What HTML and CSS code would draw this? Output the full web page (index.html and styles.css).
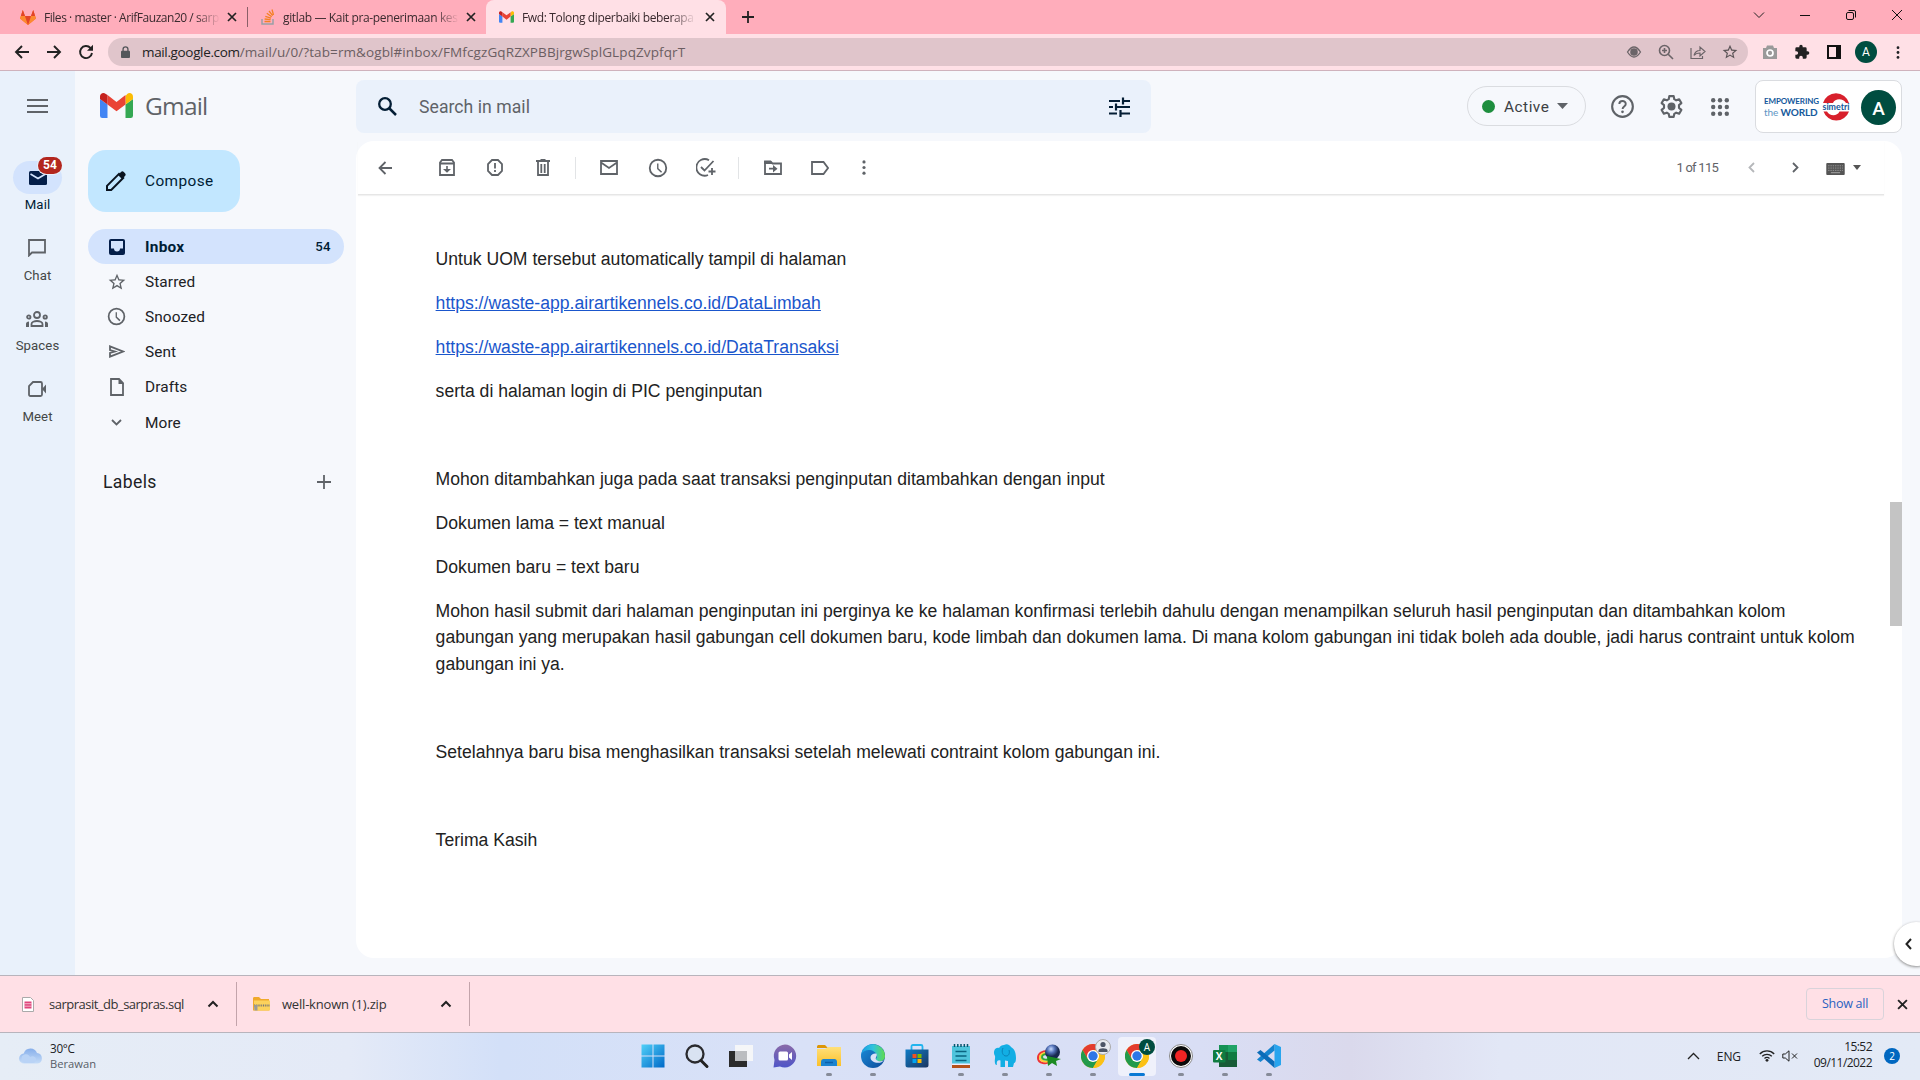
FILE: index.html
```html
<!DOCTYPE html>
<html lang="en">
<head>
<meta charset="utf-8">
<title>Gmail</title>
<link rel="stylesheet" href="styles.css">
</head>
<body>
<svg class="defs" aria-hidden="true">
  <defs>
    <linearGradient id="gWin" x1="0" y1="0" x2="1" y2="1"><stop offset="0" stop-color="#50d0f8"/><stop offset="1" stop-color="#0069c8"/></linearGradient>
    <linearGradient id="gChat" x1="0" y1="0" x2="0" y2="1"><stop offset="0" stop-color="#8a6aa8"/><stop offset="1" stop-color="#4f55c8"/></linearGradient>
    <linearGradient id="gFold" x1="0" y1="0" x2="0" y2="1"><stop offset="0" stop-color="#ffe07a"/><stop offset="1" stop-color="#fbc02a"/></linearGradient>
    <linearGradient id="gEdge" x1="0" y1="0" x2="1" y2="0"><stop offset="0" stop-color="#1b9de2"/><stop offset=".5" stop-color="#2fc3dd"/><stop offset="1" stop-color="#62dc4c"/></linearGradient>
    <linearGradient id="gEdge2" x1="0" y1="0" x2="1" y2="1"><stop offset="0" stop-color="#1b8fdc"/><stop offset="1" stop-color="#0c4a98"/></linearGradient>
    <linearGradient id="gStore" x1="0" y1="0" x2="1" y2="1"><stop offset="0" stop-color="#0f7cc6"/><stop offset="1" stop-color="#1b3560"/></linearGradient>
    <linearGradient id="gCloud" x1="0" y1="0" x2="0" y2="1"><stop offset="0" stop-color="#86aeea"/><stop offset="1" stop-color="#c5dcf8"/></linearGradient>
    <radialGradient id="gGlobe" cx=".4" cy=".3"><stop offset="0" stop-color="#c8dcff"/><stop offset=".5" stop-color="#5472b8"/><stop offset="1" stop-color="#18284e"/></radialGradient>
    <symbol id="gmail" viewBox="0 0 33 25">
      <path d="M0 6v16.700A2.300 2.300 0 0 0 2.300 25H7.500V11.500z" fill="#4285f4"/>
      <path d="M33 6v16.700A2.300 2.300 0 0 1 30.700 25H25.500V11.500z" fill="#34a853"/>
      <path d="M25.500 3v8.500L33 6V3.400C33 .3 29.500-1 27.200.9z" fill="#fbbc04"/>
      <path d="M7.500 11.500V2.100l9 6.800 9-6.800v9.400l-9 6.800z" fill="#ea4335"/>
      <path d="M0 3.400V6l7.500 5.500V2.100L5.800.9C3.500-1 0 .3 0 3.400z" fill="#c5221f"/>
    </symbol>
    <symbol id="close" viewBox="0 0 10 10"><path d="M1 1l8 8M9 1L1 9" stroke="currentColor" stroke-width="1.700" fill="none"/></symbol>
    <symbol id="caretup" viewBox="0 0 12 8"><path d="M1.500 6.500L6 2l4.500 4.500" stroke="currentColor" stroke-width="2" fill="none"/></symbol>
    <symbol id="clock" viewBox="0 0 24 24"><path fill="currentColor" d="M12 2a10 10 0 1 0 0 20 10 10 0 0 0 0-20zm0 18a8 8 0 1 1 0-16 8 8 0 0 1 0 16zm.5-13H11v6l4.300 4.300 1.200-1.200-4-3.800z"/></symbol>
    <symbol id="dots" viewBox="0 0 4 16"><g fill="currentColor"><circle cx="2" cy="2" r="1.700"/><circle cx="2" cy="8" r="1.700"/><circle cx="2" cy="14" r="1.700"/></g></symbol>
    <symbol id="star" viewBox="0 0 24 24"><path fill="currentColor" d="M22 9.240l-7.190-.62L12 2 9.190 8.630 2 9.240l5.460 4.730L5.820 21 12 17.270 18.180 21l-1.630-7.030L22 9.240zM12 15.400l-3.760 2.270 1-4.280-3.320-2.880 4.380-.38L12 6.100l1.710 4.040 4.380.38-3.320 2.880 1 4.280L12 15.400z"/></symbol>
    <symbol id="chrome" viewBox="0 0 24 24">
      <circle cx="12" cy="12" r="12" fill="#fbc116"/>
      <path d="M1.600 6A12 12 0 0 1 22.400 6H12L6.800 15z" fill="#e33b2e"/>
      <path d="M1.600 6A12 12 0 0 0 12 24L17.200 15 12 18 6.800 15z" fill="#229a4b"/>
      <path d="M12 6h10.400A12 12 0 0 1 12 24l5.200-9z" fill="#fbc116"/>
      <circle cx="12" cy="12" r="6" fill="#fff"/><circle cx="12" cy="12" r="4.700" fill="#2d77e6"/>
    </symbol>
  </defs>
</svg>

<header class="tabstrip">
  <div class="tab tab-first">
    <svg class="fav" viewBox="0 0 16 16"><path d="M8 16L0 9.500 2.800 1l2.200 6h6l2.200-6L16 9.500z" fill="#fc6d26"/><path d="M5 7H.9L0 9.500 8 16zM11 7h4.100l.9 2.500L8 16z" fill="#fc8a30"/><path d="M2.800 1l2.200 6H.9zM13.200 1L11 7h4.100zM5 7h6l-3 9z" fill="#e24329"/></svg>
    <span class="tab-title t1">Files · master · ArifFauzan20 / sarp</span>
    <svg class="tab-x"><use href="#close"/></svg>
  </div>
  <div class="tab tab-second">
    <svg class="fav" viewBox="0 0 16 16"><path d="M2 10v5h11v-5" stroke="#9aa0a6" stroke-width="1.500" fill="none"/><path d="M4.500 12.500h6M4.600 10l6 .7M5.300 7.300l5.700 1.800M6.800 4.300l4.900 3.500M9 2l3.700 4.700M12 .5l1.500 5.500" stroke="#f48024" stroke-width="1.300"/></svg>
    <span class="tab-title t2">gitlab — Kait pra-penerimaan kes</span>
    <svg class="tab-x"><use href="#close"/></svg>
  </div>
  <div class="tab tab-active">
    <svg class="fav fav-gm"><use href="#gmail"/></svg>
    <span class="tab-title t3">Fwd: Tolong diperbaiki beberapa</span>
    <svg class="tab-x"><use href="#close"/></svg>
  </div>
  <svg class="newtab" viewBox="0 0 12 12"><path d="M6 0v12M0 6h12" stroke="#222" stroke-width="1.800"/></svg>
  <div class="winctl">
    <svg viewBox="0 0 12 12"><path d="M1 3.500l5 5 5-5" stroke="#222" fill="none"/></svg>
    <svg viewBox="0 0 12 12"><path d="M1 6.500h10" stroke="#111"/></svg>
    <svg viewBox="0 0 12 12"><rect x="1.500" y="3.500" width="7" height="7" rx="1.500" stroke="#111" fill="none"/><path d="M3.500 1.500H9A1.500 1.500 0 0 1 10.500 3v5.500" stroke="#111" fill="none"/></svg>
    <svg viewBox="0 0 12 12"><path d="M1 1l10 10M11 1L1 11" stroke="#111" fill="none"/></svg>
  </div>
</header>

<div class="toolbar">
  <svg viewBox="0 0 16 16"><path d="M15 8H2M8 2L2 8l6 6" class="nav"/></svg>
  <svg viewBox="0 0 16 16"><path d="M1 8h13M8 2l6 6-6 6" class="nav"/></svg>
  <svg viewBox="0 0 16 16"><path d="M14 9A6 6 0 1 1 12.500 4L14 5.600" class="nav"/><path d="M15 .8v6H9z" fill="#222"/></svg>
  <div class="omnibox">
    <svg class="lock" viewBox="0 0 10 14"><rect x="0" y="5" width="10" height="8" rx="1" fill="#54575b"/><path d="M2.300 6V3.500a2.700 2.700 0 0 1 5.400 0V6" stroke="#54575b" stroke-width="1.500" fill="none"/></svg>
    <span class="url"><b>mail.google.com</b>/mail/u/0/?tab=rm&amp;ogbl#inbox/FMfcgzGqRZXPBBjrgwSplGLpqZvpfqrT</span>
    <div class="omni-icons">
      <svg viewBox="0 0 16 16"><path d="M1.500 8Q8-2 14.500 8 8 18 1.500 8z" fill="none" stroke="#6b6468" stroke-width="1.300"/><circle cx="8" cy="8" r="3.800" fill="#6b6468"/></svg>
      <svg viewBox="0 0 16 16"><circle cx="6.500" cy="6.500" r="5" class="oi"/><path d="M10.200 10.200L15 15M4 6.500h5M6.500 4v5" class="oi"/></svg>
      <svg viewBox="0 0 16 16"><path d="M1 4v10.500h11.500V12M4 11.500C5 7.500 7 6.500 10 6.500V3l5 4.500-5 4.500V9C7.500 9 5.500 9.500 4 11.500z" class="oi thin"/></svg>
      <svg class="bookmark"><use href="#star"/></svg>
    </div>
  </div>
  <div class="ext">
    <svg viewBox="0 0 16 16"><path d="M1 4h3l1-2.500h6L12 4h3v11H1z" fill="#9a9a9a"/><circle cx="8" cy="9" r="3" fill="none" stroke="#fff" stroke-width="1.700"/></svg>
    <svg viewBox="0 0 24 24"><path fill="#222" d="M20.500 11H19V7a2 2 0 0 0-2-2h-4V3.500a2.500 2.500 0 0 0-5 0V5H4a2 2 0 0 0-2 2v3.800h1.500a2.700 2.700 0 0 1 0 5.400H2V20a2 2 0 0 0 2 2h3.800v-1.500a2.700 2.700 0 0 1 5.400 0V22H17a2 2 0 0 0 2-2v-4h1.500a2.500 2.500 0 0 0 0-5z"/></svg>
    <svg viewBox="0 0 14 14"><path d="M1 1h12v12H1z" fill="none" stroke="#111" stroke-width="2"/><path d="M9 1h4v12H9z" fill="#111"/></svg>
    <span class="av-small">A</span>
    <svg class="menu"><use href="#dots"/></svg>
  </div>
</div>

<main class="gmail">
  <nav class="rail">
    <svg class="burger" viewBox="0 0 21 14"><path d="M0 1h21M0 7h21M0 13h21" stroke="#5f6368" stroke-width="1.800"/></svg>
    <div class="rail-item mail">
      <span class="pill"><svg width="18" height="14" viewBox="0 0 18 14"><rect width="18" height="14" rx="1.500" fill="#041e49"/><path d="M1.500 3L9 7.500 16.500 3" stroke="#d3e3fd" stroke-width="1.600" fill="none"/></svg><span class="badge">54</span></span>
      <span>Mail</span>
    </div>
    <div class="rail-item">
      <span class="pill"><svg width="18" height="18" viewBox="0 0 18 18"><path d="M1 1h16v12.500H4L1 16.500z" class="ln"/></svg></span>
      <span>Chat</span>
    </div>
    <div class="rail-item">
      <span class="pill"><svg width="22" height="16" viewBox="0 0 22 16"><g class="ln"><circle cx="11" cy="4" r="3"/><path d="M5.500 15v-2c0-2 3-3 5.500-3s5.500 1 5.500 3v2z"/><circle cx="2.800" cy="6" r="1.700"/><circle cx="19.200" cy="6" r="1.700"/></g><path d="M0 16v-3c0-1.500 1-2.500 3-2.500V16zM22 16v-3c0-1.500-1-2.500-3-2.500V16z" fill="#5f6368"/></svg></span>
      <span>Spaces</span>
    </div>
    <div class="rail-item">
      <span class="pill"><svg width="18" height="16" viewBox="0 0 18 16"><path d="M5 1h7.500c1 0 1.500.5 1.500 1.500v11c0 1-.5 1.500-1.500 1.500h-10C1.500 15 1 14.500 1 13.500V5z" class="ln"/><path d="M14 8l4-4.500v9z" fill="#5f6368"/></svg></span>
      <span>Meet</span>
    </div>
  </nav>

  <aside class="side">
    <div class="brand"><svg><use href="#gmail"/></svg><span>Gmail</span></div>
    <button class="compose"><svg viewBox="0 0 20 20"><path d="M1 19v-4.200L13 2.800l4.200 4.200L5.200 19z" fill="none" stroke="#0a1420" stroke-width="2"/><path d="M12 4l3-3c1-1 2-.8 2.800 0L19 2.200c.8.800 1 1.800 0 2.800l-3 3z" fill="#0a1420"/></svg><span>Compose</span></button>
    <div class="folder on"><svg width="16" height="16" viewBox="0 0 16 16"><rect width="16" height="16" rx="2" fill="#041e49"/><path d="M2 2h12v7.500h-3a3 3 0 0 1-6 0H2z" fill="#d3e3fd"/></svg><span>Inbox</span><em>54</em></div>
    <div class="folder"><svg width="20" height="20"><use href="#star"/></svg><span>Starred</span></div>
    <div class="folder"><svg width="21" height="21"><use href="#clock"/></svg><span>Snoozed</span></div>
    <div class="folder"><svg width="16" height="13" viewBox="0 0 16 13"><path d="M1 1.300l13 5.200-13 5.200V8l5-1.500L1 5z" class="ln"/></svg><span>Sent</span></div>
    <div class="folder"><svg width="14" height="18" viewBox="0 0 14 18"><path d="M1 1h8l4 4v12H1z" class="ln"/><path d="M8.500 0v6H14z" fill="#5f6368"/></svg><span>Drafts</span></div>
    <div class="folder more"><svg width="11" height="7" viewBox="0 0 11 7"><path d="M1 1l4.500 4.500L10 1" class="ln"/></svg><span>More</span></div>
    <div class="labels"><span>Labels</span><svg width="14" height="14" viewBox="0 0 14 14"><path d="M7 0v14M0 7h14" class="ln"/></svg></div>
  </aside>

  <section class="content">
    <div class="topbar">
      <div class="search">
        <svg width="19" height="19" viewBox="0 0 19 19"><circle cx="7" cy="7" r="5.800" fill="none" stroke="#041e35" stroke-width="2.300"/><path d="M11 11l7 7" stroke="#041e35" stroke-width="2.500"/></svg>
        <span>Search in mail</span>
        <svg width="21" height="20" viewBox="0 0 21 20"><path d="M0 4h11M14 4h7M14 .5v7M0 10h4M7 10h14M7 6.500v7M0 16.500h8M11 16.500h10M11.500 13v7" stroke="#041e35" stroke-width="2.200"/></svg>
      </div>
      <div class="active"><i></i><span>Active</span><svg width="11" height="6" viewBox="0 0 11 6"><path d="M0 0h11L5.500 6z" fill="#5f6368"/></svg></div>
      <div class="tools">
        <svg viewBox="0 0 24 24"><circle cx="12" cy="12" r="10.800" fill="none" stroke="#5f6368" stroke-width="2.200"/><path d="M8.700 9.500c0-4.400 6.700-4.400 6.700-.2 0 2.600-3.300 2.700-3.300 5.200" fill="none" stroke="#5f6368" stroke-width="2"/><circle cx="12" cy="17.600" r="1.400" fill="#5f6368"/></svg>
        <svg viewBox="0 0 24 24"><path d="M9.700 1.200h4.600l.6 3.200 2 1.200 3.100-1.100 2.300 4-2.500 2.100v2.800l2.500 2.100-2.300 4-3.100-1.100-2 1.200-.6 3.200H9.700l-.6-3.200-2-1.200L4 19.500l-2.300-4 2.500-2.100v-2.800L1.700 8.500l2.300-4 3.100 1.100 2-1.200z" fill="none" stroke="#5f6368" stroke-width="2.200" stroke-linejoin="round"/><circle cx="12" cy="12" r="4.200" fill="#5f6368"/></svg>
        <svg class="apps" viewBox="0 0 18 18"><g fill="#5f6368"><circle cx="2.200" cy="2.200" r="2.200"/><circle cx="9" cy="2.200" r="2.200"/><circle cx="15.800" cy="2.200" r="2.200"/><circle cx="2.200" cy="9" r="2.200"/><circle cx="9" cy="9" r="2.200"/><circle cx="15.800" cy="9" r="2.200"/><circle cx="2.200" cy="15.800" r="2.200"/><circle cx="9" cy="15.800" r="2.200"/><circle cx="15.800" cy="15.800" r="2.200"/></g></svg>
      </div>
      <div class="org">
        <div class="slogan"><span>EMPOWERING</span><span><i>the</i> WORLD</span></div>
        <svg class="simetri" viewBox="0 0 28 28"><path d="M1 10A13.500 13.500 0 0 1 27 10H24C22 5.500 13 4.500 11 10z" fill="#d8202c"/><path d="M27 18.500A13.500 13.500 0 0 1 1.500 18.500H5C7 23 15 24 17.500 18.500z" fill="#d8202c"/><text x="14" y="16.800" text-anchor="middle" textLength="27" lengthAdjust="spacingAndGlyphs">simetri</text></svg>
        <span class="av-big">A</span>
      </div>
    </div>

    <article class="panel">
      <div class="actions">
        <svg width="14" height="14" viewBox="0 0 14 14"><path d="M14 7H1.500M7.500 1l-6 6 6 6" class="ln"/></svg>
        <div class="grp g1">
          <svg width="16" height="17" viewBox="0 0 16 17"><path d="M1 3.500L3 1h10l2 2.500V16H1zM1 4.500h14" class="ln"/><path d="M7.200 7h1.600v3H12l-4 3.800L4 10h3.200z" fill="#5f6368"/></svg>
          <svg width="16" height="17" viewBox="0 0 16 17"><path d="M5 1h6l4 4v7l-4 4H5l-4-4V5z" class="ln"/><path d="M8 4v5.500M8 11v2" class="ln"/></svg>
          <svg width="14" height="17" viewBox="0 0 14 17"><path d="M0 2h14M4.500 1h5M2 3v13h10V3M5.300 5v9M8.700 5v9" class="ln"/></svg>
        </div>
        <div class="grp g2">
          <svg width="18" height="15" viewBox="0 0 18 15"><path d="M1 1h16v13H1zM1 2.500L9 8l8-5.500" class="ln"/></svg>
          <svg width="22" height="22" class="gray"><use href="#clock"/></svg>
          <svg width="20" height="19" viewBox="0 0 20 19"><path d="M13 2.300A8.300 8.300 0 1 0 12 17M5 9l3.500 3.500L17.500 3M16 10v7M12.500 13.500h7" class="ln"/></svg>
        </div>
        <div class="grp g3">
          <svg width="18" height="15" viewBox="0 0 18 15"><path d="M1 1.500h5.500l2 2H17V14H1zM5 8.700h6" class="ln"/><path d="M0 1h7l1.500 3H0zM9 5l4.500 3.700L9 12.500z" fill="#5f6368"/></svg>
          <svg width="18" height="14" viewBox="0 0 18 14"><path d="M1 1h11.500L17 7l-4.500 6H1z" class="ln"/></svg>
          <svg width="4" height="15" class="gray"><use href="#dots"/></svg>
        </div>
        <div class="pager">
          <span>1 of 115</span>
          <svg width="7" height="11" viewBox="0 0 7 11"><path d="M6 1L1.500 5.500 6 10" class="ln faint"/></svg>
          <svg width="7" height="11" viewBox="0 0 7 11"><path d="M1 1l4.500 4.500L1 10" class="ln"/></svg>
          <svg width="19" height="12" viewBox="0 0 20 13"><rect width="20" height="13" rx="1" fill="#555"/><path d="M2 3h16M2 5.500h16M2 8h16" stroke="#999" stroke-dasharray="1.500 1"/><path d="M5 10.500h10" stroke="#aaa"/></svg>
          <svg width="8" height="5" viewBox="0 0 8 5"><path d="M0 0h8L4 5z" fill="#555"/></svg>
        </div>
      </div>
      <div class="message">
        <p>Untuk UOM tersebut automatically tampil di halaman</p>
        <p><a>https://waste-app.airartikennels.co.id/DataLimbah</a></p>
        <p><a>https://waste-app.airartikennels.co.id/DataTransaksi</a></p>
        <p>serta di halaman login di PIC penginputan</p>
        <p>&nbsp;</p>
        <p>Mohon ditambahkan juga pada saat transaksi penginputan ditambahkan dengan input</p>
        <p>Dokumen lama = text manual</p>
        <p>Dokumen baru = text baru</p>
        <p>Mohon hasil submit dari halaman penginputan ini perginya ke ke halaman konfirmasi terlebih dahulu dengan menampilkan seluruh hasil penginputan dan ditambahkan kolom gabungan yang merupakan hasil gabungan cell dokumen baru, kode limbah dan dokumen lama. Di mana kolom gabungan ini tidak boleh ada double, jadi harus contraint untuk kolom gabungan ini ya.</p>
        <p>&nbsp;</p>
        <p>Setelahnya baru bisa menghasilkan transaksi setelah melewati contraint kolom gabungan ini.</p>
        <p>&nbsp;</p>
        <p>Terima Kasih</p>
      </div>
      <div class="thumb"></div>
    </article>
  </section>
  <div class="sidetoggle"><svg width="7" height="12" viewBox="0 0 7 12"><path d="M6 1L1.500 6 6 11" stroke="#222" stroke-width="2" fill="none"/></svg></div>
</main>

<div class="downloads">
  <div class="dl">
    <svg width="12" height="15" viewBox="0 0 12 15"><path d="M.5.5h8l3 3v11H.5z" fill="#fff" stroke="#aaa"/><path d="M2.500 4.500h7v7h-7z" fill="#e0457b"/><path d="M2.500 6.700h7M2.500 9.200h7" stroke="#fff" stroke-width=".6"/></svg>
    <span class="d1">sarprasit_db_sarpras.sql</span>
    <svg class="up"><use href="#caretup"/></svg>
  </div>
  <div class="dl">
    <svg width="17" height="14" viewBox="0 0 17 14"><path d="M0 1.500C0 .5.500 0 1.500 0H6l2 2h8v11.500H0z" fill="#f0a92c"/><path d="M1 3.500h16v10H1z" fill="#fcd25c"/><path d="M1 8.500h16" stroke="#777" stroke-width="2" stroke-dasharray="1 .8"/><path d="M1 8h3.500v5.500H1.500z" fill="#999"/></svg>
    <span class="d2">well-known (1).zip</span>
    <svg class="up"><use href="#caretup"/></svg>
  </div>
  <button class="showall">Show all</button>
  <svg class="dlx"><use href="#close"/></svg>
</div>

<footer class="taskbar">
  <div class="weather">
    <svg width="24" height="17" viewBox="0 0 24 17"><path d="M5.500 16.500a5 5 0 0 1-.8-10A7 7 0 0 1 18 6a5.300 5.300 0 0 1 .5 10.500z" fill="url(#gCloud)"/><path d="M5.500 16a4.500 4.500 0 0 1 0-8.500c3-1 5 1 5.500 2.500 3-2 6 0 6 2s-1 4-3 4z" fill="#b9d3f6"/></svg>
    <div><span class="temp">30°C</span><span class="cond">Berawan</span></div>
  </div>
  <div class="apps-row">
    <div class="app"><svg viewBox="0 0 24 24"><path d="M.5.5h11v11H.5zM12.500.5h11v11h-11zM.5 12.500h11v11H.5zM12.500 12.500h11v11h-11z" fill="url(#gWin)"/></svg></div>
    <div class="app"><svg viewBox="0 0 24 24"><circle cx="10" cy="10" r="8.500" fill="#d9e3f2" stroke="#2a2a2e" stroke-width="2.300"/><path d="M16 16.500l6 6" stroke="#222" stroke-width="3" stroke-linecap="round"/></svg></div>
    <div class="app"><svg viewBox="0 0 24 24"><path d="M0 7h18v16H0z" fill="#2b2b2b"/><path d="M6 1h18v16H6z" fill="#f5f6f8"/><path d="M6 7h12v10H6z" fill="#bbbdc0"/></svg></div>
    <div class="app"><svg viewBox="0 0 24 24"><path d="M12 .5A11.500 11.500 0 1 1 7 22.500L.5 23.500 1.500 16A11.500 11.500 0 0 1 12 .5z" fill="url(#gChat)"/><rect x="5.500" y="7.500" width="9.500" height="9" rx="1.500" fill="#fff"/><path d="M16 10.500l3-2.500v8l-3-2.500z" fill="#fff"/></svg></div>
    <div class="app run"><svg viewBox="0 0 24 24"><path d="M0 3C0 1.500.7 1 2 1h6l3 3H0z" fill="#dd9606"/><path d="M0 5h8l3-2h13v19H0z" fill="url(#gFold)"/><path d="M4 22v-4c0-2 1-3 2.500-3h11c1.500 0 2.500 1 2.500 3v4z" fill="#1c83cf"/><path d="M8 18.500h8" stroke="#0c5fa8" stroke-width="1.500"/></svg></div>
    <div class="app run"><svg viewBox="0 0 24 24"><circle cx="12" cy="12" r="12" fill="url(#gEdge2)"/><path d="M.2 10A12 12 0 0 1 24 12c0 5-5 6.500-8.500 4.500-2-1.500 1-2 .5-5C14 5 4 4 .2 10z" fill="url(#gEdge)"/><path d="M9.500 13c.5-2.500 3-4 5.800-3.500C17 12 14 13 15 15.500c2 2.500 6 2 8 .5-3 5-14 3-13.500-3z" fill="#d9e1f7"/></svg></div>
    <div class="app"><svg viewBox="0 0 24 24"><path d="M6.500 6V2.500C6.500 1.500 7 1 8 1h8c1 0 1.500.5 1.500 1.500V6" fill="none" stroke="#22b4ee" stroke-width="1.800"/><path d="M.5 5.500h23V21c0 1.700-.8 2.500-2.500 2.500H3C1.300 23.500.5 22.700.5 21z" fill="url(#gStore)"/><path d="M7.500 10h4v4h-4z" fill="#f25022"/><path d="M12.500 10h4v4h-4z" fill="#7fba00"/><path d="M7.500 15h4v4h-4z" fill="#00a4ef"/><path d="M12.500 15h4v4h-4z" fill="#ffb900"/></svg></div>
    <div class="app run"><svg viewBox="0 0 24 24"><path d="M3 21h18v3H3z" fill="#b5521b"/><path d="M3 2h18v19H3z" fill="#4fc4dc"/><path d="M3 19.500h18v1.500H3z" fill="#eef"/><path d="M6.500 7.500h11M6.500 12h11M6.500 16.500h11" stroke="#0a6480" stroke-width="1.500"/><path d="M5.500 0v3M8.800 0v3M12 0v3M15.300 0v3M18.500 0v3" stroke="#09566e" stroke-width="1.500"/></svg></div>
    <div class="app run"><svg viewBox="0 0 24 24"><path d="M11 1c3-2 6 0 7 2 4 2 5 7 5 11 0 3-.7 5-2 5l-1 4h-5v-6l-3-.5V23H7.500v-6.500C5 15.500 3 17 4 21l-1.500-.5C1 17 2.500 14 2 12-.5 8 2 3 6 4c1-2 3-3 5-3z" fill="#12aee4"/><path d="M10 4c-2 4 0 8 3 8 3 0 4-3 3-6" stroke="#0b83b8" fill="none"/></svg></div>
    <div class="app run"><svg viewBox="0 0 24 24"><g fill="none" stroke-width="2"><path d="M17 16C9 22 1 19 1 14s5-7 9-7" stroke="#e33"/><path d="M17 14.500C10 20 3 17 3 13.500S7 9 10 9" stroke="#fc3"/><path d="M16 13c-5 4-11 3-11 0 0-2 3-3 5-3" stroke="#3a3"/></g><circle cx="15.500" cy="8" r="7.500" fill="url(#gGlobe)"/><path d="M10 12l14 3-5 2 1 5-5-3-4 3z" fill="#1b8a22"/></svg></div>
    <div class="app run"><svg viewBox="0 0 24 24"><use href="#chrome"/></svg><span class="mini user"><svg viewBox="0 0 14 14"><circle cx="7" cy="4.500" r="2.600" fill="#4c5565"/><path d="M2.500 12V10.500C2.500 7.500 11.500 7.500 11.500 10.500V12z" fill="#4c5565"/></svg></span></div>
    <div class="app run current"><svg viewBox="0 0 24 24"><use href="#chrome"/></svg><span class="mini">A</span></div>
    <div class="app run"><svg viewBox="0 0 24 24"><circle cx="12" cy="12" r="11.500" fill="#fff" stroke="#888"/><circle cx="12" cy="12" r="10" fill="#0a0a0a"/><circle cx="12" cy="12" r="6" fill="#f02424"/></svg></div>
    <div class="app run"><svg viewBox="0 0 24 24"><path d="M6 1h18v22H6z" fill="#21a366"/><path d="M6 1h9v7H6z" fill="#169255"/><path d="M15 8h9v8h-9z" fill="#107c41"/><path d="M6 8h9v8H6zM6 16h18v7H6z" fill="#185c37"/><rect y="6" width="12.500" height="12.500" rx="1" fill="#107c41"/><text x="6.200" y="16" text-anchor="middle" class="xl">X</text></svg></div>
    <div class="app run"><svg viewBox="0 0 24 24"><path d="M17.500 0L24 3v18l-6.500 3z" fill="#28a5ee"/><path d="M17.500 0v6.500L3.500 18 0 15.500z" fill="#1584cf"/><path d="M17.500 24v-6.500L3.500 6 0 8.500z" fill="#0b6cb8"/></svg></div>
  </div>
  <div class="tray">
    <svg width="13" height="8" viewBox="0 0 13 8"><path d="M1 7l5.500-5.500L12 7" stroke="#222" stroke-width="1.300" fill="none"/></svg>
    <span class="lang">ENG</span>
    <svg width="16" height="13" viewBox="0 0 16 13"><path d="M.8 5a10 10 0 0 1 14.400 0M3.200 7.300a6.800 6.800 0 0 1 9.600 0M5.500 9.500a3.500 3.500 0 0 1 5 0" stroke="#222" stroke-width="1.300" fill="none"/><circle cx="8" cy="11.300" r="1.400" fill="#222"/></svg>
    <svg class="snd" width="16" height="12" viewBox="0 0 16 12"><path d="M.8 4h2.500L7 .8v10.400L3.300 8H.8zM10 3.500l5 5M15 3.500l-5 5" stroke="#222" fill="none"/></svg>
    <div class="time"><span>15:52</span><span>09/11/2022</span></div>
    <span class="notif">2</span>
  </div>
</footer>
</body>
</html>
```
FILE: styles.css
```css
* { box-sizing: border-box; }
body { margin: 0; width: 1920px; height: 1080px; overflow: hidden; display: flex; flex-direction: column; font-family: Roboto, sans-serif; color: #202124; background: #f6f8fc; }
svg { display: block; flex: none; }
.defs { position: absolute; width: 0; height: 0; }
.ln { fill: none; stroke: #5f6368; stroke-width: 1.8; }
.faint { stroke: #b5b7ba; }
button { font: inherit; border: 0; padding: 0; }

/* browser tabs */
.tabstrip { height: 34px; background: #ffadbb; display: flex; align-items: center; font: 12px "Open Sans", sans-serif; flex: none; }
.tab { display: flex; align-items: center; height: 34px; }
.tab-first { width: 248px; padding-left: 20px; }
.tab-second { width: 238px; padding-left: 12px; }
.tab-first::after { content: ""; width: 1px; height: 20px; background: #8a5f68; margin-left: 10px; }
.tab-active { width: 240px; padding-left: 13px; background: #ffe0e6; border-radius: 8px 8px 0 0; }
.fav { width: 16px; height: 16px; margin-right: 8px; }
.tab-second .fav { margin-right: 7px; }
.fav-gm { width: 15px; height: 12px; }
.tab-title { width: 176px; white-space: nowrap; color: #3a2a2e; margin-right: 7px; mask-image: linear-gradient(90deg, #000 86%, transparent); }
.t1 { letter-spacing: -.46px; }
.t2 { letter-spacing: -.36px; }
.t3 { width: 174px; letter-spacing: -.36px; margin-right: 9px; }
.tab-x { width: 10px; height: 10px; color: #222; }
.newtab { width: 12px; height: 12px; margin-left: 16px; }
.winctl { margin-left: auto; display: flex; gap: 34px; padding: 0 17px 5px 0; }
.winctl svg { width: 12px; height: 12px; }

/* address bar */
.toolbar { height: 37px; flex: none; background: #ffe0e6; border-bottom: 1px solid #cfb2bc; display: flex; align-items: center; padding-left: 14px; gap: 16px; }
.toolbar > svg { width: 16px; height: 16px; }
.nav { fill: none; stroke: #222; stroke-width: 1.9; }
.omnibox { width: 1640px; height: 28px; margin-left: -2px; border-radius: 14px; background: #e0c5cb; display: flex; align-items: center; padding: 0 10px 0 13px; }
.lock { width: 9px; height: 13px; }
.url { margin-left: 12px; font: 13.5px "Open Sans", sans-serif; letter-spacing: .02px; color: #6b5e62; }
.url b { font-weight: 400; color: #222; letter-spacing: -.35px; }
.url { letter-spacing: .1px; }
.omni-icons { margin-left: auto; display: flex; gap: 16px; align-items: center; }
.omni-icons svg { width: 16px; height: 16px; }
.omni-icons .bookmark { color: #5c5558; transform: scale(1.1); }
.oi { fill: none; stroke: #6b6468; stroke-width: 1.6; }
.thin { stroke-width: 1.2; }
.ext { display: flex; align-items: center; width: 156px; margin-left: -2px; }
.ext svg { width: 16px; height: 16px; margin-right: 16px; }
.ext svg:nth-child(3) { width: 14px; height: 14px; margin: 0 14px 0 1px; }
.av-small { width: 22px; height: 22px; border-radius: 50%; background: #004d40; color: #fff; font-size: 12px; display: grid; place-items: center; }
.ext .menu { width: 4px; height: 13px; margin: 0 0 0 19px; }

/* gmail shell */
.gmail { height: 904px; flex: none; display: flex; position: relative; overflow: hidden; background: #f6f8fc; }
.rail { width: 75px; background: #e9f1fb; display: flex; flex-direction: column; align-items: center; font-size: 13.2px; letter-spacing: .1px; color: #444746; }
.burger { width: 21px; height: 14px; margin: 28px 0 48px; }
.rail-item { height: 70.5px; width: 75px; display: flex; flex-direction: column; align-items: center; gap: 3px; }
.pill { position: relative; width: 49px; height: 33px; border-radius: 17px; display: grid; place-items: center; }
.rail-item .pill { margin-left: -1px; }
.mail { color: #001d35; }
.mail .pill { background: #d3e3fd; margin-left: 0; }
.badge { position: absolute; right: 0; top: -4px; width: 24px; height: 17px; border-radius: 9px; background: #b3261e; box-shadow: 0 0 0 1px #e9f1fb; color: #fff; font-weight: 700; font-size: 12px; line-height: 17px; text-align: center; }
.side { width: 281px; padding: 0 12px 0 13px; font-size: 15.4px; letter-spacing: .1px; display: flex; flex-direction: column; }
.brand { height: 79px; display: flex; align-items: center; padding: 0 0 10px 12px; gap: 12px; font: 24.5px "Open Sans", sans-serif; letter-spacing: -.8px; color: #5f6368; }
.brand svg { width: 33px; height: 25px; }
.compose { width: 152px; height: 62px; border-radius: 18px; background: #c2e7ff; color: #001d35; letter-spacing: .4px; display: flex; align-items: center; padding-left: 18px; gap: 19px; margin-bottom: 17px; }
.compose svg { width: 20px; height: 20px; }
.folder { height: 35px; display: grid; grid-template-columns: 57px 1fr auto; align-items: center; padding-right: 13px; color: #202124; flex: none; }
.folder svg { justify-self: center; color: #5f6368; }
.on { background: #d3e3fd; border-radius: 18px; font-weight: 700; color: #001d35; letter-spacing: .25px; }
.on em { font-style: normal; font-size: 13.2px; font-weight: 500; letter-spacing: .4px; }
.more { margin-top: 1px; }
.labels { display: flex; justify-content: space-between; align-items: center; padding: 0 13px 0 15px; height: 22px; margin-top: 31px; font-size: 17.6px; letter-spacing: .35px; }

.content { width: 1546px; }
.topbar { height: 70px; display: flex; padding-top: 9px; }
.search { width: 795px; height: 53px; border-radius: 8px; background: #eaf1fb; display: flex; align-items: center; padding: 0 21px 0 22px; gap: 22px; font-size: 17.6px; color: #5f6368; }
.search span { flex: 1; letter-spacing: .05px; }
.active { width: 119px; height: 40px; border: 1px solid #dadce0; border-radius: 20px; margin: 6px 0 0 316px; display: flex; align-items: center; padding-left: 14px; font-size: 15.4px; letter-spacing: .5px; color: #3c4043; }
.active i { width: 13px; height: 13px; border-radius: 50%; background: #1e8e3e; margin-right: 9px; }
.active span { padding-top: 1px; }
.active svg { margin-left: 8px; }
.tools { display: flex; align-items: center; gap: 26px; height: 53px; margin-left: 25px; }
.tools svg { width: 23px; height: 23px; }
.tools .apps { width: 18px; height: 18px; margin-left: 2px; }
.org { margin-left: auto; width: 147px; height: 53px; border: 1px solid #dadce0; border-radius: 8px; background: #fff; display: flex; align-items: center; padding-left: 8px; }
.slogan { width: 52px; display: flex; flex-direction: column; font: 700 8px/11px Lato, sans-serif; letter-spacing: -.1px; color: #15599b; margin-right: 6px; white-space: nowrap; }
.slogan span + span { font-size: 10px; }
.slogan i { font-style: normal; font-weight: 400; color: #5d95c4; }
.simetri { width: 28px; height: 28px; }
.simetri text { font: 700 8.5px Lato, sans-serif; fill: #14589a; }
.av-big { width: 35px; height: 35px; border-radius: 50%; background: #004d40; color: #fff; font-size: 19px; font-weight: 500; display: grid; place-items: center; margin: 1px 0 0 11px; padding-top: 2px; }

.panel { height: 817px; background: #fff; border-radius: 18px; position: relative; }
.actions { height: 54px; margin: 0 18px 0 2px; border-bottom: 1px solid #e6e6e6; box-shadow: 0 1px 1px #f2f2f2; display: flex; align-items: center; padding-left: 20px; }
.grp { display: grid; grid-template-columns: repeat(3, 48px); place-items: center; }
.g1 { margin-left: 31px; width: 153px; border-right: 1px solid #e2e4e6; height: 22px; }
.g2 { grid-template-columns: 48px 49px 48px; margin-left: 9px; width: 154px; border-right: 1px solid #e2e4e6; height: 22px; }
.g3 { margin-left: 10px; grid-template-columns: 47px 48px 40px; }
.gray { color: #5f6368; }
.pager { margin-left: auto; display: flex; align-items: center; font-size: 13px; letter-spacing: -.75px; color: #5f6368; padding-right: 23px; }
.pager span { margin-right: 30px; }
.pager svg + svg { margin-left: 37px; }
.pager svg:nth-of-type(3) { margin: 3px 8px 0 27px; }
.pager svg:nth-of-type(4) { margin-left: 0; }
.message { padding: 33px 40px 0 79.6px; font: 17.6px/26.4px "Liberation Sans", Arial, sans-serif; color: #222; margin-top: 18px; }
.message p { margin: 0 0 17.6px; }
.message a { color: #1a56cc; text-decoration: underline; }
.thumb { position: absolute; right: 0; top: 361px; width: 12px; height: 124px; background: #c4c4c4; }
.sidetoggle { position: absolute; left: 1894px; top: 851px; width: 44px; height: 44px; border-radius: 50%; background: #fff; box-shadow: 0 1px 3px #888; display: flex; align-items: center; padding-left: 11px; }

/* downloads */
.downloads { height: 58px; flex: none; background: #ffe0e6; border-top: 1px solid #b8b4bc; border-bottom: 1px solid #b8b4bc; display: flex; align-items: center; font: 13px "Open Sans", sans-serif; color: #333; }
.dl { display: flex; align-items: center; height: 44px; border-right: 1px solid #c3a4ab; width: 237px; padding-left: 22px; }
.dl + .dl { width: 233px; padding-left: 16px; }
.dl span { white-space: nowrap; }
.d1 { margin-left: 15px; letter-spacing: -.5px; }
.d2 { margin-left: 12px; letter-spacing: -.2px; }
.up { width: 12px; height: 8px; margin: 0 17px 0 auto; color: #222; }
.showall { margin-left: auto; width: 78px; height: 32px; border: 1px solid #d9d3da; border-radius: 4px; background: none; color: #2a62c0; font-size: 12.5px; font-weight: 500; letter-spacing: -.25px; padding-bottom: 2px; }
.dlx { width: 11px; height: 11px; margin: 0 12px 0 13px; color: #222; }

/* taskbar */
.taskbar { height: 47px; flex: none; background: linear-gradient(90deg, #e6edf6 0, #e4eaf7 350px, #d3e0f8 500px, #d9e1f7 800px, #d9def5 1200px, #dad9ec 1350px, #e2e7f6 1500px, #e3eaf6 100%); display: flex; align-items: center; font: 12px "Open Sans", sans-serif; }
.weather { display: flex; align-items: center; width: 631px; padding-left: 19px; gap: 7px; }
.weather > svg { margin-bottom: 3px; }
.weather div, .time { display: flex; flex-direction: column; line-height: 16px; padding-bottom: 2px; }
.temp { font-size: 11.7px; letter-spacing: -.3px; }
.cond { color: #585d66; font-size: 11.2px; }
.apps-row { display: flex; margin-top: -1px; }
.app { width: 44px; height: 47px; display: grid; place-items: center; position: relative; }
.app > svg { width: 24px; height: 24px; overflow: visible; }
.run::after { content: ""; position: absolute; left: 19px; top: 40px; width: 6px; height: 3px; border-radius: 2px; background: #868b98; }
.current::before { content: ""; position: absolute; inset: 4px 3px; background: #eff1fb; border-radius: 4px; }
.current > svg { position: relative; }
.current::after { left: 14px; width: 16px; background: #0a78d4; }
.mini { position: absolute; left: 24px; top: 6px; width: 16px; height: 16px; border-radius: 50%; background: #004d40; color: #fff; font-size: 10px; display: grid; place-items: center; }
.user { background: #e7eaef; border: 1px solid #aaa; }
.user svg { width: 14px; height: 14px; }
.xl { font: 700 10px "Open Sans", sans-serif; fill: #fff; }
.tray { flex: 1; display: flex; align-items: center; justify-content: flex-end; padding: 0 20px 2px 0; }
.lang { margin: 2px 18px 0 17px; letter-spacing: -.1px; }
.snd { margin-left: 7px; }
.time { text-align: right; width: 74px; letter-spacing: -.55px; padding-top: 1px; }
.notif { width: 16px; height: 16px; border-radius: 50%; background: #0067c0; color: #fff; display: grid; place-items: center; font-size: 10px; margin-left: 12px; }
```
